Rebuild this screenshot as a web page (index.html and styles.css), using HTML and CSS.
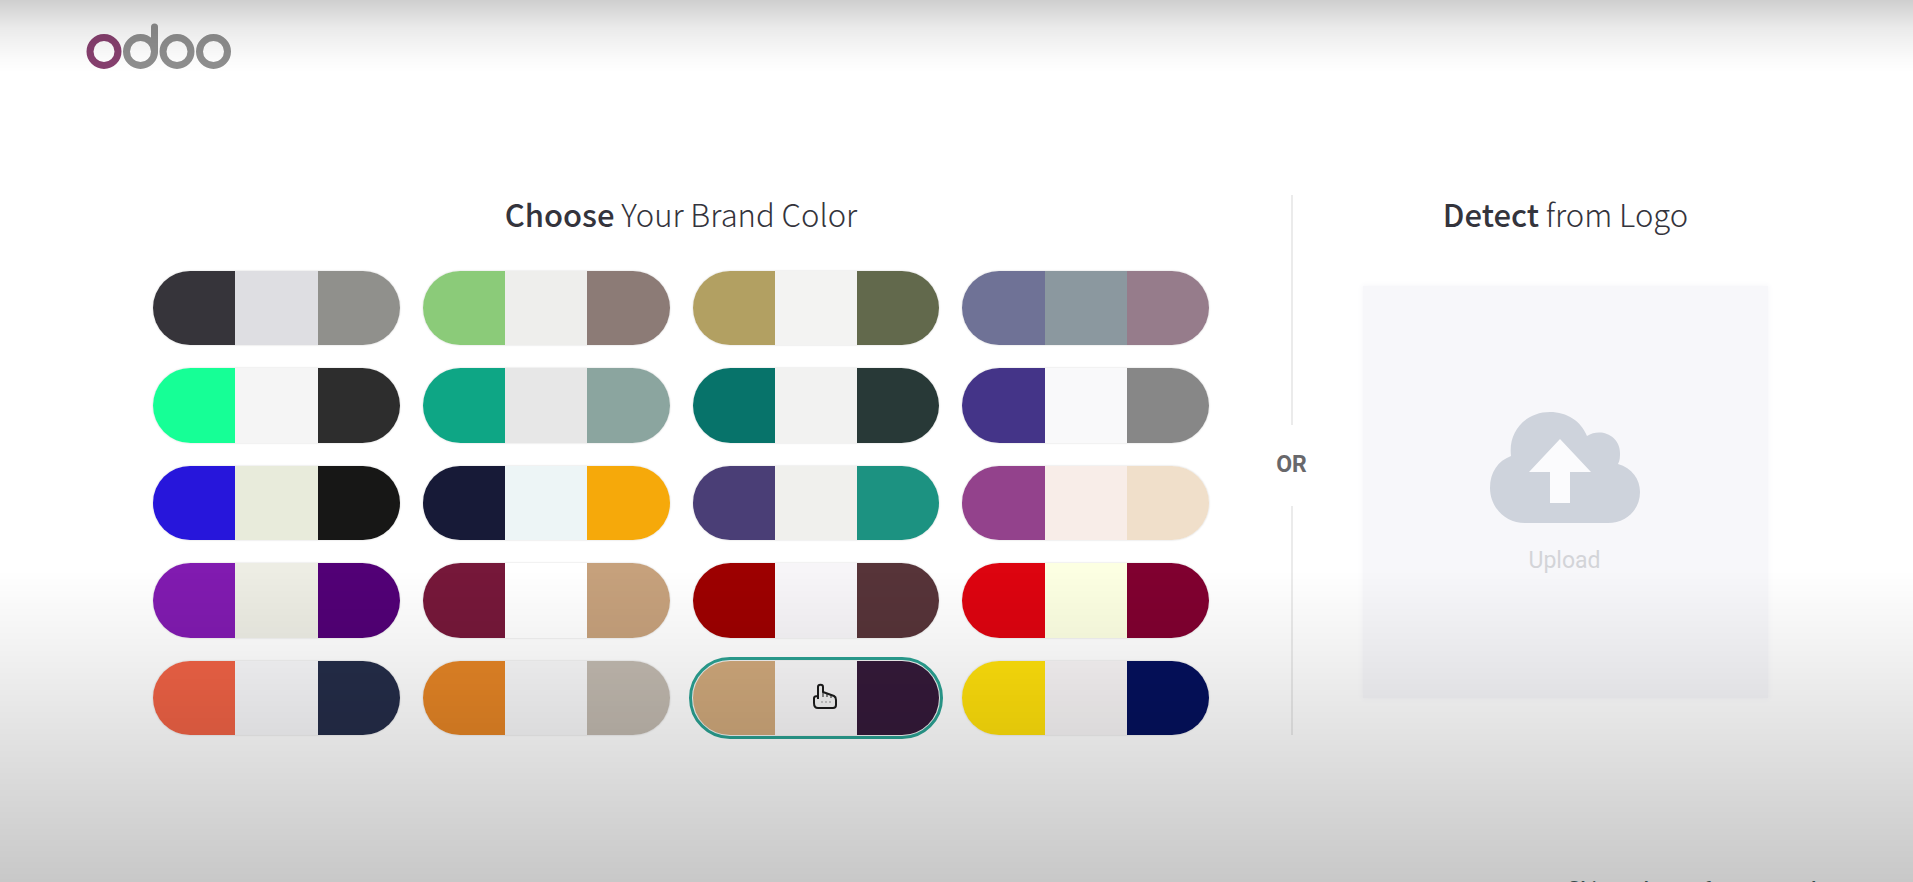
FILE: index.html
```html
<!DOCTYPE html>
<html lang="en">
<head>
<meta charset="utf-8">
<title>Odoo - Choose Your Brand Color</title>
<link rel="stylesheet" href="styles.css">
</head>
<body>
<header class="topbar">
  <a href="#" class="logo" aria-label="odoo">
    <svg width="146" height="48" viewBox="0 0 146 48" fill="none" stroke-width="7">
      <g stroke="#8f8f8f">
        <circle cx="54.500" cy="28.500" r="14"/>
        <path d="M68.500 28.500V4" stroke-linecap="round"/>
        <circle cx="91" cy="28.500" r="14"/>
        <circle cx="127.500" cy="28.500" r="14"/>
      </g>
      <circle cx="18" cy="28.500" r="14" stroke="#87406f"/>
    </svg>
  </a>
</header>
<main class="configurator">
  <section class="palettes">
    <h2 class="title"><b>Choose</b> Your Brand Color</h2>
    <div class="palette-grid" id="grid"></div>
  </section>
  <div class="divider"><span class="divider-label">OR</span></div>
  <section class="detect">
    <h2 class="title"><b>Detect</b> from Logo</h2>
    <button type="button" class="upload">
      <svg class="cloud" width="150" height="112" viewBox="0 0 150 112">
        <path fill="#ced3dc" d="M35 112C15 112 0 96 0 77C0 61 8 50 21 45C18 20 36 1 60 1C77 1 91 10 97 25C111 16 130 25 130 42C130 46 130 49 128 53C142 57 150 68 150 81C150 99 136 112 118 112Z"/>
        <path fill="#fbfbfd" d="M70 28L101 61H80V92H60V61H39Z"/>
      </svg>
      <span>Upload</span>
    </button>
  </section>
</main>
<footer class="footer"><a href="#" class="skip">Skip and start from scratch</a></footer>
<script src="app.js"></script>
</body>
</html>
```
FILE: styles.css
```css
* { box-sizing: border-box; }

body {
  margin: 0;
  height: 100vh;
  overflow: hidden;
  background: #fff;
  font-family: Roboto, "Liberation Sans", sans-serif;
}

/* shading over the top and bottom edges of the page */
body::before,
body::after {
  content: "";
  position: fixed;
  left: 0;
  right: 0;
  z-index: 5;
  pointer-events: none;
}
body::before {
  top: 0;
  height: 72px;
  background: linear-gradient(rgba(0, 0, 0, .19), rgba(0, 0, 0, .08) 40%, rgba(0, 0, 0, .02) 80%, transparent);
}
body::after {
  bottom: 0;
  height: 312px;
  background: linear-gradient(transparent, rgba(0, 0, 0, .05) 25%, rgba(0, 0, 0, .215));
}

.topbar { padding: 23px 86px 0; height: 195px; }
.logo { display: inline-block; }
.logo svg { display: block; }

.configurator {
  display: grid;
  grid-template-columns: 1056fr 154px 405fr;
  min-height: 540px;
  padding: 0 145px 0 153px;
}

.palettes, .detect { display: flex; flex-direction: column; }

.title {
  margin: 0;
  font: 300 31px/38px "Noto Sans CJK SC", "Noto Sans", sans-serif;
  color: #34343c;
  text-align: center;
}
.title b { font-weight: 500; }

.palette-grid {
  flex: 1;
  display: grid;
  grid-template-columns: repeat(4, 1fr);
  grid-template-rows: repeat(5, 1fr);
  gap: 23px;
  margin-top: 38px;
}

.palette {
  display: flex;
  padding: 0;
  border: 0;
  border-radius: 40px;
  overflow: hidden;
  background: none;
  box-shadow: 0 0 2px rgba(0, 0, 0, .2);
  cursor: pointer;
}
.palette.selected {
  position: relative;
  overflow: visible;
  outline: 3px solid #2ba192;
  outline-offset: 1px;
}
.palette.selected .swatch:first-child { border-radius: 40px 0 0 40px; }
.palette.selected .swatch:nth-child(3) { border-radius: 0 40px 40px 0; }
.swatch { flex: 1; align-self: stretch; }

.pointer { position: absolute; left: 119px; top: 22px; }

.divider {
  display: flex;
  flex-direction: column;
  align-items: center;
  padding-left: 11px;
}
.divider::before, .divider::after {
  content: "";
  flex: 1;
  width: 2px;
  background: #ebebeb;
}
.divider-label {
  padding: 25px 0 27px;
  font-size: 23px;
  font-weight: 700;
  line-height: 29px;
  color: #68686b;
}

.upload {
  display: flex;
  flex-direction: column;
  align-items: center;
  gap: 22px;
  height: 412px;
  margin-top: 53px;
  padding: 125px 2px 0 0;
  border: 0;
  background: #f7f7fa;
  box-shadow: 0 0 6px 1px #f7f7fa;
  font: 23px/32px Roboto, sans-serif;
  color: #d3d4d8;
  cursor: pointer;
}

.footer {
  display: flex;
  justify-content: flex-end;
  padding: 140px 90px 0 0;
}
.skip {
  font-size: 21px;
  font-weight: 500;
  line-height: 28px;
  color: #46605f;
  text-decoration: none;
  white-space: nowrap;
}
```
FILE: app.js
```js
const palettes = [
  ["#36343a", "#dedee2", "#90908c"], ["#8bcb79", "#eeeeec", "#8c7b76"], ["#b2a062", "#f3f3f2", "#62694c"], ["#6f7296", "#8b989f", "#967c8b"],
  ["#16ff96", "#f5f5f5", "#2d2d2d"], ["#0ea685", "#e7e7e7", "#8ba59f"], ["#07736a", "#f2f2f1", "#283937"], ["#443488", "#f9f9fa", "#878787"],
  ["#2716db", "#e8ebdb", "#171716"], ["#171a37", "#edf5f6", "#f6a90a"], ["#4a3e76", "#f0f0ed", "#1c9281"], ["#93428c", "#f8ede8", "#f0dfca"],
  ["#811bb0", "#ededE4", "#520076"], ["#76183a", "#ffffff", "#c6a17c"], ["#9d0000", "#f7f5f8", "#573439"], ["#dd0410", "#fcffe2", "#800030"],
  ["#f06346", "#f8f8fa", "#252d49"], ["#e58526", "#f8f8f9", "#c2bab0"], ["#d0a97c", "#f9f8f9", "#351a3a"], ["#ffe00c", "#f8f5f6", "#05115d"]
];
const selected = 18;
const pointer = `<svg class="pointer" width="26" height="28" viewBox="0 0 26 28"><path d="M6 16V4C6 1 11 1 11 4V9L22 13Q24 14 24 17V22Q24 25 21 25H6Q2 25 2 20V15Q2 13 6 13" fill="#f4f4f4" stroke="#1c1c1c" stroke-width="2" stroke-linejoin="round"/><path d="M11 9V14M15 11V14M19 12V15" stroke="#1c1c1c" stroke-width="1"/><path d="M9 19H20" stroke="#999" stroke-dasharray="2 2"/></svg>`;

const grid = document.getElementById("grid");
palettes.forEach((colors, i) => {
  const button = document.createElement("button");
  button.type = "button";
  button.className = i === selected ? "palette selected" : "palette";
  button.setAttribute("aria-label", "Palette " + (i + 1));
  button.innerHTML = colors.map(c => `<span class="swatch" style="background:${c}"></span>`).join("") + (i === selected ? pointer : "");
  grid.append(button);
});
```
